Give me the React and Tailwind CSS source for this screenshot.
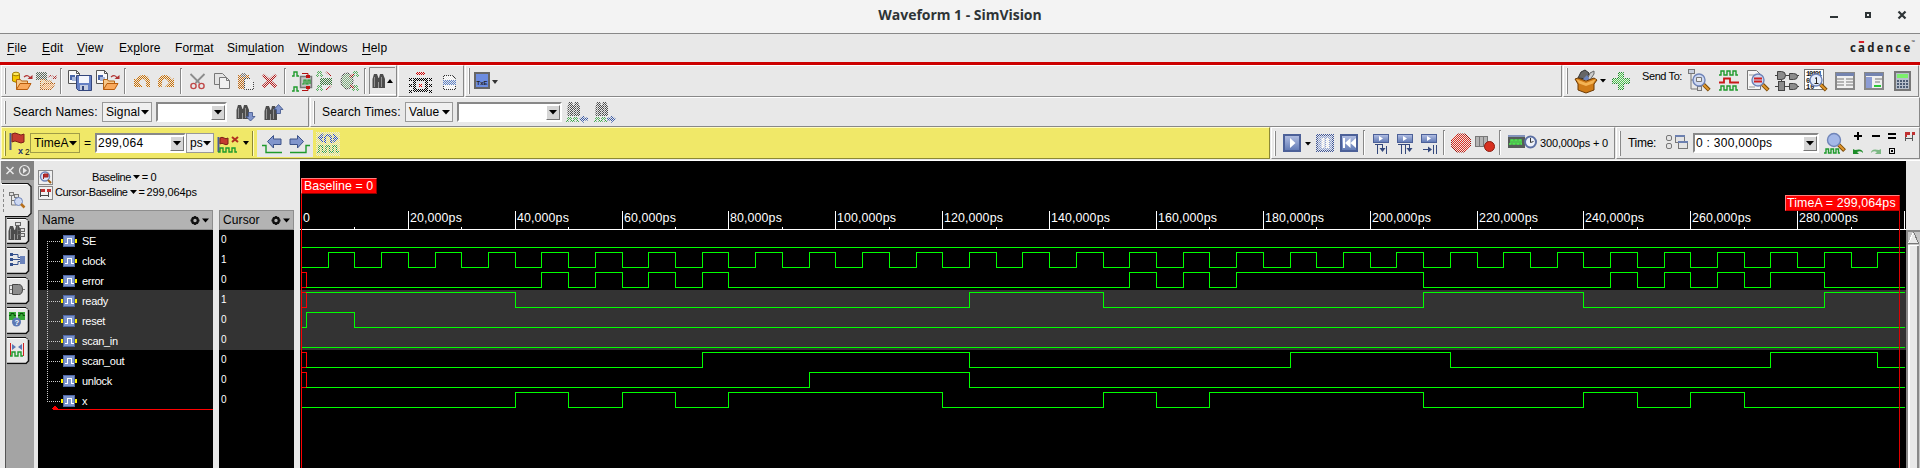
import React from "react";

/* Icon slot: its viewBox uses window coordinates, so slots placed side by side continue one another. */
function Ic({ x, y, w, h, dim, children }) {
  return (
    <svg width={w} height={h} viewBox={`${x} ${y} ${w} ${h}`} className="block shrink-0" fill="none">
      {children}
      {dim && <rect x={x} y={y} width={w} height={h} fill={dim} shapeRendering="crispEdges" />}
    </svg>
  );
}

const DIM = "url(#dim)";

function Defs() {
  return (
    <defs>
      <pattern id="dim" width="2" height="2" patternUnits="userSpaceOnUse">
        <path d="M0 0h1v1H0zM1 1h1v1H1z" fill="#e8e8e8" />
      </pattern>
      <linearGradient id="blue" x1="0" y1="0" x2="0" y2="1">
        <stop offset="0" stopColor="#b4c0e4" />
        <stop offset="1" stopColor="#5f78b4" />
      </linearGradient>
    </defs>
  );
}

const Handle = ({ x, y, h }) => (
  <g shapeRendering="crispEdges">
    <path d={`M${x + 0.5} ${y}v${h}`} stroke="#fff" />
    <path d={`M${x + 1.5} ${y}v${h}`} stroke="#888" />
  </g>
);
const Sep = ({ x, y = 68, h = 26 }) => (
  <g shapeRendering="crispEdges">
    <path d={`M${x - 1} ${y + 0.5}h2M${x - 0.5} ${y}v${h}`} stroke="#888" />
    <path d={`M${x + 0.5} ${y + 1}v${h - 1}`} stroke="#fff" />
  </g>
);
const Caret = ({ x, y, c = "#000" }) => <path d={`M${x} ${y}h6l-3 4z`} fill={c} />;
const Folder = ({ x, y }) => (
  <g>
    <path d={`M${x + 0.5} ${y + 11.5}v-10h4l1 1.500h6v3`} fill="#f7c88a" stroke="#b56414" />
    <path d={`M${x + 0.5} ${y + 11.5}l3.500 -6h11l-3.500 6z`} fill="#f9a95c" stroke="#b85c0c" />
    <path d={`M${x + 8} ${y - 1}q4 -3 6 1`} stroke="#b03030" strokeWidth="1.200" />
    <path d={`M${x + 11.5} ${y + 1}h5v-4z`} fill="#b03030" />
  </g>
);
const Page = ({ x, y }) => (
  <g>
    <path d={`M${x + 0.5} ${y + 0.5}h8l3 3v10h-11z`} fill="#fafafa" stroke="#555" />
    <path d={`M${x + 8.5} ${y + 0.5}v3h3`} stroke="#555" />
    <rect x={x + 2} y={y + 5} width="5" height="5" fill="#4a66a8" />
    <rect x={x + 4} y={y + 7} width="5" height="4" fill="#a8b8dc" />
  </g>
);
const Binos = ({ x, y }) => (
  <g fill="#4c4c4c">
    <path d={`M${x + 2} ${y}h3l1.500 4v10h-6v-9z`} />
    <path d={`M${x + 8} ${y}h3l2 5v9h-6v-10z`} />
    <rect x={x + 5} y={y + 4} width="3" height="4" />
    <path d={`M${x + 2.5} ${y + 3}v10M${x + 9.5} ${y + 3}v10`} stroke="#929292" />
  </g>
);
const Lens = ({ x, y, r = 6, fill = "#cdd8f2" }) => (
  <g>
    <path d={`M${x + r * 0.7} ${y + r * 0.7}l6 6`} stroke="#7a4a08" strokeWidth="4" />
    <path d={`M${x + r * 0.7} ${y + r * 0.7}l5.500 5.500`} stroke="#e0962c" strokeWidth="2" />
    <circle cx={x} cy={y} r={r} fill={fill} stroke="#6f84b8" strokeWidth="1.400" />
  </g>
);
const Wave = ({ x, y, c = "#1f9a2c", h = 4, n = 3, s = 6 }) => (
  <path
    d={`M${x} ${y + h}h1${Array.from({ length: n }, () => `h1v-${h}h${s / 2}v${h}h${s / 2 - 1}`).join("")}`}
    stroke={c}
    strokeWidth="1.400"
  />
);
const Gate = ({ x, y, w = 9, h = 8 }) => (
  <path d={`M${x} ${y}h${w - 4}q4 0 4 ${h / 2}q0 ${h / 2} -4 ${h / 2}h-${w - 4}z`} fill="#8c8c8c" stroke="#444" />
);
const BlueArrow = ({ x, y, flip }) => (
  <path
    transform={flip ? `translate(${2 * x + 14} 0) scale(-1 1)` : undefined}
    d={`M${x + 0.5} ${y + 6.5}l6 -6v3.500h7.500v5.500h-7.500v3.500z`}
    fill="#8296cc"
    stroke="#3c5288"
  />
);

function Segment({ className, children }) {
  return (
    <div className={`flex shrink-0 border border-t-white border-l-white border-r-[#888] border-b-[#888] ${className}`}>
      {children}
    </div>
  );
}

function Pick({ className, tone = "border-[#999] bg-[#f0f0f0]", children }) {
  return (
    <div
      className={`flex shrink-0 items-center justify-between border pr-[2px] pl-[3px] text-[12px] leading-none tracking-[0.1px] ${tone} ${className}`}
    >
      <span>{children}</span>
      <svg width="8" height="5" className="shrink-0">
        <path d="M0 0h8l-4 4.600z" fill="#000" />
      </svg>
    </div>
  );
}

function Entry({ className, children }) {
  return (
    <div
      className={`flex shrink-0 items-center justify-between border-2 border-t-[#888] border-r-white border-b-white border-l-[#888] bg-white text-[12px] leading-none tracking-[0.28px] ${className}`}
    >
      <span className="pl-px whitespace-nowrap">{children}</span>
      <span className="flex h-[15px] w-[14px] items-center justify-center border border-t-white border-r-[#777] border-b-[#777] border-l-white bg-[#d6d6d6]">
        <svg width="8" height="5">
          <path d="M0 0h8l-4 4.600z" fill="#000" />
        </svg>
      </span>
    </div>
  );
}

const menus = [
  ["", "F", "ile", "w-[35px]"],
  ["", "E", "dit", "w-[35px]"],
  ["", "V", "iew", "w-[42px]"],
  ["Ex", "p", "lore", "w-[56px]"],
  ["For", "m", "at", "w-[52px]"],
  ["Sim", "u", "lation", "w-[71px]"],
  ["", "W", "indows", "w-[64px]"],
  ["", "H", "elp", "w-[40px]"],
];

function TitleBar() {
  return (
    <div className="relative flex h-[34px] items-center justify-center border-b border-[#888] bg-[#f3f3f3] pb-[4px]">
      <span className="font-['Open_Sans','Noto_Sans',sans-serif] text-[14px] leading-none font-bold tracking-[-0.030px] text-[#2e3436]">
        Waveform 1 - SimVision
      </span>
      <svg width="90" height="20" viewBox="1825 5 90 20" className="absolute top-[5px] right-[5px]" fill="none">
        <path d="M1830 17h8" stroke="#2e3436" strokeWidth="2" />
        <rect x="1866" y="13" width="4" height="4" stroke="#2e3436" strokeWidth="2" />
        <path d="M1898.500 11.500l7 7M1905.500 11.500l-7 7" stroke="#2e3436" strokeWidth="2.200" />
      </svg>
    </div>
  );
}

function MenuBar() {
  return (
    <div className="flex h-[31px] items-center justify-between border-b-[3px] border-[#cc0000] pl-[7px]">
      <div className="flex pb-[1px] text-[12px] tracking-[0.12px]">
        {menus.map(([a, u, b, w]) => (
          <span key={u + b} className={`block ${w}`}>
            {a}
            <span className="underline underline-offset-2">{u}</span>
            {b}
          </span>
        ))}
      </div>
      <div className="flex h-full w-[70px] items-start">
        <span className="relative origin-left scale-x-[0.88] pt-[4px] font-['Open_Sans','Noto_Sans',sans-serif] text-[13px] leading-[18px] font-bold tracking-[2.500px] text-[#222]">
          cadence
          <span className="absolute top-[7px] left-[10px] h-[2px] w-[6px] bg-[#d8202c]" />
          <span className="absolute top-[4px] left-[70px] text-[5px] leading-[8px] tracking-normal">™</span>
        </span>
      </div>
    </div>
  );
}

function ToolRow1() {
  return (
    <div className="flex h-[32px] gap-px pl-px">
      <Segment className="w-[396px]">
        <Ic x={2} y={66} w={34} h={30}>
          <Defs />
          <Handle x={4} y={68} h={26} />
          <path d="M12.500 74v7q3.500 2.500 7 0v-7" fill="#f4c800" stroke="#a07c00" />
          <ellipse cx="16" cy="74" rx="3.500" ry="1.800" fill="#ffe95c" stroke="#a07c00" />
          <Folder x={16} y={78} />
        </Ic>
        <Ic x={36} y={66} w={22} h={30} dim={DIM}>
          <rect x="36" y="72" width="11" height="8" fill="#5a6a5c" />
          <Folder x={40} y={78} />
        </Ic>
        <Ic x={58} y={66} w={36} h={30}>
          <Sep x={61} />
          <Page x={68} y={70} />
          <path d="M76.500 75.500h15v15h-13l-2-2z" fill="#6580c4" stroke="#34467c" />
          <rect x="79" y="76" width="10" height="7" fill="#f4f6fc" />
          <rect x="80" y="85" width="8" height="5" fill="#c4cce0" />
          <rect x="82" y="86" width="2" height="4" fill="#34467c" />
        </Ic>
        <Ic x={94} y={66} w={33} h={30}>
          <Page x={96} y={70} />
          <Folder x={103} y={78} />
          <Sep x={125} />
        </Ic>
        <Ic x={127} y={66} w={50} h={30} dim={DIM}>
          <path d="M148 87q1-9-4-10-5-.5-6.500 5" stroke="#cc7000" strokeWidth="4" />
          <path d="M134 78v9h9z" fill="#cc7000" />
          <path d="M160 87q-1-9 4-10 5-.5 6.500 5" stroke="#cc7000" strokeWidth="4" />
          <path d="M174 78v9h-9z" fill="#cc7000" />
        </Ic>
        <Ic x={177} y={66} w={35} h={30}>
          <Sep x={181} />
          <path d="M190.500 74l9 9M204.500 74l-9 9" stroke="#8c8c8c" strokeWidth="1.800" />
          <circle cx="193.500" cy="86" r="2.600" stroke="#c04848" strokeWidth="1.400" />
          <circle cx="201.500" cy="86" r="2.600" stroke="#c04848" strokeWidth="1.400" />
        </Ic>
        <Ic x={212} y={66} w={23} h={30}>
          <path d="M214.500 73.500h8l3 3v8h-11z" fill="#e4e4e4" stroke="#777" />
          <path d="M219.500 77.500h7l3 3v8h-10z" fill="#f0f0f0" stroke="#777" />
          <path d="M226.500 77.500v3h3" stroke="#777" />
        </Ic>
        <Ic x={235} y={66} w={24} h={30} dim={DIM}>
          <rect x="238" y="75" width="11" height="14" fill="#c46c14" />
          <rect x="241" y="73" width="5" height="4" fill="#777" />
          <path d="M244.500 78.500h6l3 3v8h-9z" fill="#f4f4f4" stroke="#444" />
        </Ic>
        <Ic x={259} y={66} w={22} h={30} dim={DIM}>
          <path d="M263 75l13 12M276 75l-13 12" stroke="#b81818" strokeWidth="3.500" />
        </Ic>
        <Ic x={281} y={66} w={34} h={30}>
          <Sep x={285} />
          <Wave x={292} y={72} n={1} />
          <Wave x={292} y={87} n={1} />
          <rect x="300.500" y="76.500" width="11" height="11" fill="#c4c4c4" stroke="#777" strokeWidth="1.500" />
          <path d="M302 84h2v-4h2v4h2v-4h2v4" stroke="#1f9a2c" strokeWidth="1.200" />
          <path d="M302 73.500h6v3M302 90.500h6v-3" stroke="#b01010" />
          <rect x="306" y="75" width="4" height="3" fill="#c01010" />
          <rect x="306" y="86" width="4" height="3" fill="#c01010" />
        </Ic>
        <Ic x={315} y={66} w={46} h={30} dim={DIM}>
          <Wave x={316} y={72} n={1} />
          <Wave x={316} y={86} n={1} />
          <rect x="320" y="78" width="12" height="7" fill="#3c7c3c" />
          <path d="M326 72l5 4M326 90l5-4" stroke="#b01010" strokeWidth="1.500" />
          <ellipse cx="347" cy="81" rx="6" ry="8" fill="#7cac7c" stroke="#333" />
          <Wave x={352} y={72} n={1} />
          <Wave x={352} y={86} n={1} />
          <path d="M350 77l4-3M350 85l4 3" stroke="#b01010" strokeWidth="2" />
        </Ic>
        <Ic x={361} y={66} w={35} h={30}>
          <Sep x={365} />
          <path d="M369.500 94V67.500H395" stroke="#888" />
          <path d="M369 94.500h27" stroke="#fff" />
          <Binos x={372} y={74} />
          <path d="M387 83l3-4 3 4z" fill="#000" />
        </Ic>
      </Segment>
      <Segment className="w-[66px]">
        <Ic x={399} y={66} w={63} h={30} dim={DIM}>
          <rect x="416" y="72" width="9" height="3" fill="#d00000" />
          <rect x="414.500" y="79.500" width="12" height="11" stroke="#000" strokeWidth="3" />
          <rect x="419" y="84" width="3" height="3" fill="#e00000" />
          <path d="M409 79.500h3M409 85.500h3M409 91.500h3M429 79.500h3M429 85.500h3M429 91.500h3" stroke="#000" strokeWidth="3" />
          <path d="M443.500 75.500h9l3 3v11h-12z" fill="#fff" stroke="#333" />
          <rect x="443" y="80" width="13" height="5" fill="#5a80c8" />
        </Ic>
      </Segment>
      <Segment className="w-[1097px]">
        <Ic x={466} y={66} w={40} h={30}>
          <Handle x={468} y={68} h={26} />
          <rect x="475" y="73" width="14" height="15" fill="#6c8ce0" stroke="#666" strokeWidth="2" />
          <text x="476.500" y="85" fontSize="6" fontWeight="700" fill="#222" fontFamily="Liberation Sans, sans-serif" textLength="11">
            TxE
          </text>
          <Caret x={492} y={80} c="#333" />
        </Ic>
      </Segment>
      <Segment className="w-[356px]">
        <Ic x={1564} y={66} w={44} h={30}>
          <Handle x={1566} y={68} h={26} />
          <path d="M1578 78l3-6 4-2 4 3-2 6z" fill="#666" stroke="#333" />
          <path d="M1587 80l3-7 4-2v3l-4 6z" fill="#ccc" stroke="#666" />
          <path d="M1582 80l5-5 3 5z" fill="#6c84bc" />
          <path d="M1575 79l3-1 8 3 8-3 3 2-3 4v6l-8 3-8-3v-6z" fill="#d07c18" stroke="#6c3a04" />
          <path d="M1576 79l10 4 10-4-3 4.500-7 2.500-7-2.500z" fill="#f4b454" />
          <path d="M1600 79h6l-3 3.500z" fill="#000" />
        </Ic>
        <Ic x={1608} y={66} w={34} h={30} dim={DIM}>
          <path d="M1618.500 72.500h5v6h6v5h-6v6h-5v-6h-6v-5h6z" fill="#4ccc4c" stroke="#1c8c28" />
        </Ic>
        <div className="w-[44px] shrink-0 pt-[3px] text-[11px] leading-[15px] tracking-[-0.4px] whitespace-nowrap">Send To:</div>
        <Ic x={1686} y={66} w={30} h={30}>
          <path d="M1691 74v15h7M1691 80h7" stroke="#777" />
          <rect x="1688.500" y="69.500" width="6" height="4" fill="#c8d0e0" stroke="#777" />
          <rect x="1697.500" y="86.500" width="4" height="4" fill="#ddd" stroke="#777" />
          <Lens x={1699} y={80} />
          <path d="M1696.500 77.500h5v4h-5z" stroke="#777" fill="#eee" />
        </Ic>
        <Ic x={1716} y={66} w={28} h={30}>
          <Wave x={1719} y={71} n={3} />
          <path d="M1719 82.500h5v-4h6v4h9" stroke="#c81818" strokeWidth="1.800" />
          <Wave x={1719} y={86} n={3} />
        </Ic>
        <Ic x={1744} y={66} w={28} h={30}>
          <path d="M1747.500 70.500h9l4 4v15h-13z" fill="#f6f6f6" stroke="#777" />
          <path d="M1749 75h7M1749 87h6" stroke="#999" />
          <Lens x={1758} y={80} />
          <path d="M1754 78.500h8M1754 81.500h8" stroke="#d02020" strokeWidth="2" />
        </Ic>
        <Ic x={1772} y={66} w={30} h={30}>
          <path d="M1775 75.500h24M1775 86.500h24M1781.500 79v4" stroke="#444" />
          <Gate x={1777.5} y={71.5} w={8} />
          <Gate x={1789.5} y={73.5} w={8} h={6} />
          <rect x="1778.500" y="81.500" width="6" height="9" fill="#8c8c8c" stroke="#444" />
          <Gate x={1789.5} y={83.5} w={8} h={6} />
        </Ic>
        <Ic x={1802} y={66} w={30} h={30}>
          <rect x="1804.500" y="69.500" width="19" height="20" fill="#fff" stroke="#777" />
          <g fontSize="7" fill="#111" fontFamily="Liberation Mono, monospace" fontWeight="700">
            <text x="1806" y="76" textLength="16">10101</text>
            <text x="1806" y="83">0</text>
            <text x="1806" y="89">10</text>
          </g>
          <Lens x={1816} y={80} fill="#e4ecfa" />
          <path d="M1815 78.500l1.500-1v6M1814.500 83.500h4" stroke="#222" />
        </Ic>
        <Ic x={1832} y={66} w={28} h={30}>
          <rect x="1836" y="73" width="18" height="16" fill="#f0f0f0" stroke="#888" strokeWidth="2" />
          <rect x="1836" y="73" width="18" height="3" fill="#7484b0" />
          <path d="M1837 79h7M1837 82h7M1837 85h7M1846 79h7M1846 82h7M1846 85h7" stroke="#777" />
        </Ic>
        <Ic x={1860} y={66} w={28} h={30}>
          <rect x="1865" y="73" width="18" height="16" fill="#f0f0f0" stroke="#888" strokeWidth="2" />
          <rect x="1865" y="73" width="18" height="3" fill="#7484b0" />
          <rect x="1866" y="77" width="6" height="11" fill="#8c9cd4" />
          <path d="M1875 79h7M1875 82h5" stroke="#777" />
          <rect x="1874" y="85" width="7" height="2" fill="#28c838" />
        </Ic>
        <Ic x={1888} y={66} w={28} h={30}>
          <rect x="1895" y="72" width="15" height="18" fill="#b8c0cc" stroke="#777" strokeWidth="2" />
          <rect x="1897" y="74" width="11" height="4" fill="#7cf06c" />
          <path d="M1897 81h11M1897 84h11M1897 87h11" stroke="#4c5c74" strokeWidth="2" strokeDasharray="2 1" />
        </Ic>
      </Segment>
    </div>
  );
}

function ToolRow2() {
  return (
    <div className="flex h-[30px] gap-px pl-px">
      <Segment className="w-[308px]">
        <Ic x={2} y={98} w={11} h={28}>
          <Handle x={4} y={101} h={23} />
        </Ic>
        <span className="w-[89px] shrink-0 pt-[5px] text-[12px] leading-[18px] tracking-[0.15px] whitespace-nowrap">Search Names:</span>
        <Pick className="mt-[4px] h-[20px] w-[50px]">Signal</Pick>
        <Entry className="mt-[4px] ml-[4px] h-[20px] w-[71px]" />
        <Ic x={227} y={98} w={80} h={28}>
          <Binos x={236} y={105} />
          <path d="M248.500 112.500h4v4h2.500l-4.500 4.500-4.500-4.500h2.500z" fill="#8296cc" stroke="#3c5288" strokeWidth=".8" />
          <Binos x={264} y={106} />
          <path d="M276.500 113.500h4v-4h2.500l-4.500-5-4.500 5h2.500z" fill="#8296cc" stroke="#3c5288" strokeWidth=".8" />
        </Ic>
      </Segment>
      <Segment className="w-[1610px]">
        <Ic x={311} y={98} w={11} h={28}>
          <Handle x={313} y={101} h={23} />
        </Ic>
        <span className="w-[83px] shrink-0 pt-[5px] text-[12px] leading-[18px] tracking-[0.15px] whitespace-nowrap">Search Times:</span>
        <Pick className="mt-[4px] h-[20px] w-[48px]">Value</Pick>
        <Entry className="mt-[4px] ml-[4px] h-[20px] w-[105px]" />
        <Ic x={562} y={98} w={60} h={28} dim={DIM}>
          <Binos x={567} y={102} />
          <Wave x={566} y={118} n={2} h={3} />
          <path d="M579 119l5-4v2.500h4v3h-4v2.500z" fill="#3c5ca8" />
          <Binos x={595} y={102} />
          <Wave x={594} y={118} n={2} h={3} />
          <path d="M616 119l-5-4v2.500h-4v3h4v2.500z" fill="#3c5ca8" />
        </Ic>
      </Segment>
    </div>
  );
}

function ToolRow3() {
  return (
    <div className="flex h-[32px] gap-px pl-px">
      <div className="flex w-[1269px] shrink-0 border border-t-[#fffcc0] border-r-[#8c8834] border-b-[#8c8834] border-l-[#fffcc0] bg-[#f0e868]">
        <Ic x={2} y={128} w={28} h={30}>
          <path d="M4.500 131v25" stroke="#fffcc0" />
          <path d="M5.500 131v25" stroke="#8c8834" />
          <path d="M10.500 133v17" stroke="#4c5c94" strokeWidth="2" />
          <path d="M12 134q3-2 6 0t6 0v8q-3 2-6 0t-6 0z" fill="#c43c30" stroke="#7c2018" />
          <text x="18" y="154" fontSize="9" fontWeight="700" fill="#1c2c74" fontFamily="Liberation Sans, sans-serif">x</text>
          <text x="25" y="155" fontSize="8.500" fill="#111" fontFamily="Liberation Sans, sans-serif">2</text>
        </Ic>
        <Pick className="mt-[5px] h-[20px] w-[50px]" tone="border-[#a09c48] bg-[#f0e868]">TimeA</Pick>
        <span className="w-[15px] shrink-0 pt-[7px] pl-[4px] text-[12px] leading-[16px]">=</span>
        <Entry className="mt-[5px] h-[20px] w-[91px]">299,064</Entry>
        <Pick className="mt-[5px] h-[20px] w-[28px]">ps</Pick>
        <Ic x={214} y={128} w={43} h={30}>
          <path d="M218.500 137v15" stroke="#4c5c94" strokeWidth="2" />
          <path d="M220 138q2-1.500 4 0t4 0v6q-2 1.500-4 0t-4 0z" fill="#c43c30" stroke="#7c2018" />
          <path d="M232 137l6 5M238 137l-6 5" stroke="#b03020" strokeWidth="2" />
          <Wave x={218} y={148} n={3} h={4} />
          <path d="M243 141h6l-3 4z" fill="#000" />
          <path d="M252.500 131v25" stroke="#8c8834" />
          <path d="M253.500 131v25" stroke="#fffcc0" />
        </Ic>
        <div className="mt-[2px] h-[27px] w-[56px] shrink-0 bg-[#e8e8e8]">
          <Ic x={257} y={130} w={56} h={27}>
            <path d="M262 145.500h4v7h16" stroke="#1f9a2c" strokeWidth="1.400" />
            <BlueArrow x={267} y={135} />
            <path d="M290 152.500h16v-7h4" stroke="#1f9a2c" strokeWidth="1.400" />
            <BlueArrow x={290} y={135} flip />
          </Ic>
        </div>
        <div className="mt-[4px] ml-[3px] h-[24px] w-[24px] shrink-0 bg-[#f0e868]">
          <Ic x={316} y={132} w={24} h={24} dim={DIM}>
            <path d="M323 134l-4 4 4 4M333 134l4 4-4 4M318 138h5M333 138h5M325 143v-6q3-4 6 0v6" stroke="#3454a8" strokeWidth="2" />
            <Wave x={317} y={146} n={3} h={6} s={7} />
          </Ic>
        </div>
      </div>
      <Segment className="w-[344px]">
        <Ic x={1272} y={128} w={42} h={30}>
          <Handle x={1274} y={131} h={25} />
          <rect x="1284" y="135" width="16" height="16" fill="url(#blue)" stroke="#4c6098" strokeWidth="2" />
          <path d="M1290 138v10l5.500-5z" fill="#fff" />
          <path d="M1305 142h6l-3 3.500z" fill="#000" />
        </Ic>
        <Ic x={1314} y={128} w={22} h={30} dim={DIM}>
          <rect x="1317" y="135" width="16" height="16" fill="#8ca0d4" stroke="#3c5498" strokeWidth="2" />
          <path d="M1323 138v10M1327.500 138v10" stroke="#fff" strokeWidth="3" />
        </Ic>
        <Ic x={1336} y={128} w={30} h={30}>
          <rect x="1341" y="135" width="16" height="16" fill="url(#blue)" stroke="#4c6098" strokeWidth="2" />
          <path d="M1344 138v10" stroke="#fff" strokeWidth="2" />
          <path d="M1350.500 138v10l-5.500-5zM1356 138v10l-5.500-5z" fill="#fff" />
          <Sep x={1364} y={130} h={25} />
        </Ic>
        <Ic x={1366} y={128} w={80} h={30}>
          {[1373, 1397, 1421].map((x, i) => (
            <g key={x}>
              <rect x={x + 0.5} y="134.500" width="15" height="8" fill="url(#blue)" stroke="#4c6098" />
              <path d={`M${x + 6} 136v5l4-2.500z`} fill="#fff" />
              {i === 0 && (
                <g>
                  <path d="M1375 144.500h8M1377.500 145v9M1382.500 144v5M1386.500 146v8" stroke="#34487c" />
                  <path d="M1379.500 148h6l-3 4z" fill="#34487c" />
                </g>
              )}
              {i === 1 && (
                <g>
                  <path d="M1398 144.500h11M1401.500 145v9M1405.500 145v9M1409.500 144v5" stroke="#34487c" />
                  <path d="M1406.500 148h6l-3 4z" fill="#34487c" />
                </g>
              )}
              {i === 2 && (
                <g>
                  <path d="M1423 149.500h7M1433.500 145v9M1436.500 145v9" stroke="#34487c" />
                  <path d="M1428 146.500v6l4-3z" fill="#34487c" />
                </g>
              )}
            </g>
          ))}
          <Sep x={1444} y={130} h={25} />
        </Ic>
        <Ic x={1446} y={128} w={26} h={30} dim={DIM}>
          <path d="M1457 134h8l5.500 5.500v7l-5.500 5.500h-8l-5.500-5.500v-7z" fill="#e02c1c" stroke="#a01008" />
        </Ic>
        <Ic x={1472} y={128} w={68} h={30}>
          <rect x="1475.500" y="136.500" width="12" height="10" fill="#b4b4b4" stroke="#777" />
          <path d="M1479.500 137v9M1483.500 137v9" stroke="#777" />
          <circle cx="1489.500" cy="146.500" r="5" fill="#d83020" stroke="#8c1c10" />
          <Sep x={1500} y={130} h={25} />
          <rect x="1508" y="135" width="17" height="13" fill="#555c58" />
          <rect x="1508" y="135" width="17" height="2" fill="#8494bc" />
          <Wave x={1509} y={140} c="#4cf04c" n={3} s={4} />
          <circle cx="1530.500" cy="142" r="5.500" fill="#eef2fa" stroke="#5c70a4" strokeWidth="2" />
          <path d="M1530.500 138v4.500l3-1" stroke="#333" />
        </Ic>
        <span className="pt-[7px] text-[11px] leading-[16px] tracking-[-0.15px] whitespace-nowrap">300,000ps + 0</span>
      </Segment>
      <Segment className="w-[304px]">
        <Ic x={1616} y={128} w={11} h={30}>
          <Handle x={1618} y={131} h={25} />
        </Ic>
        <span className="w-[35px] shrink-0 pt-[7px] text-[12px] leading-[16px] tracking-[-0.3px]">Time:</span>
        <Ic x={1662} y={128} w={30} h={30}>
          <g stroke="#777" fill="#e4e4e4">
            <rect x="1665.500" y="135.500" width="5" height="5" rx="1.500" />
            <rect x="1665.500" y="143.500" width="5" height="5" rx="1.500" />
            <rect x="1674.500" y="135.500" width="9" height="7" />
            <rect x="1677.500" y="141.500" width="9" height="7" />
          </g>
          <path d="M1674 136h10M1677 142h10" stroke="#6c80b0" strokeWidth="2" />
        </Ic>
        <Entry className="mt-[5px] h-[20px] w-[126px]">0 : 300,000ps</Entry>
        <Ic x={1818} y={128} w={100} h={30}>
          <Wave x={1823} y={149} n={3} h={4} s={5} />
          <Lens x={1833} y={140} r={6.5} fill="#a4b8e8" />
          <path d="M1853 136h8M1857 132v8M1871 136h8M1887 134h8M1887 138h8" stroke="#000" strokeWidth="2" />
          <path d="M1904.500 132v9M1911.500 132v9M1905 138.500h7" stroke="#555" />
          <path d="M1904 132h5v3h-3v2h-2zM1911 132h3v3h-3z" fill="#c03030" />
          <path d="M1852 149v5h6l-2-2q4-2 6 1 0-5-8-3z" fill="#1c8c28" />
          <path d="M1880 149v5h-6l2-2q-4-2-6 1 0-5 8-3z" fill="#7cb884" />
          <rect x="1888.500" y="148.500" width="5" height="5" stroke="#000" />
          <rect x="1890" y="150" width="2" height="2" fill="#000" />
        </Ic>
      </Segment>
    </div>
  );
}

const Tab = ({ y, h }) => (
  <g>
    <path d={`M7 ${y + 0.5}h19l3 3v${h - 6}l-3 3H7z`} fill="#e8e8e8" />
    <path d={`M7 ${y + 0.5}h19l2 2`} stroke="#111" />
    <path d={`M7 ${y + 1.5}h18`} stroke="#fff" />
    <path d={`M28.500 ${y + 3}v${h - 6}l-2.500 2.500H7`} stroke="#111" strokeWidth="1.500" />
  </g>
);

function SideTabs() {
  return (
    <div className="flex w-[34px] shrink-0 flex-col bg-[#a4a4a4]">
      <Ic x={0} y={161} w={34} h={307}>
        <rect x="0" y="161" width="1" height="307" fill="#e8e8e8" />
        <rect x="1" y="161" width="33" height="19" fill="#828282" />
        <path d="M6.500 167l7 7M13.500 167l-7 7" stroke="#e8e8e8" strokeWidth="1.500" />
        <circle cx="24.500" cy="170.500" r="5" stroke="#e8e8e8" strokeWidth="1.200" />
        <path d="M23 167.500v6l4-3z" fill="#e8e8e8" />
        <rect x="1" y="216" width="4" height="252" fill="#e8e8e8" />
        <path d="M5.500 217v251" stroke="#555" />
        <path d="M1 183h27l3 3v28l-3 3H1z" fill="#e8e8e8" />
        <path d="M2 183.500h26l3 3v27l-3 3H5" stroke="#111" strokeWidth="1.200" />
        <path d="M1 184.500h26" stroke="#fff" />
        <path d="M3.500 189v23" stroke="#888" strokeDasharray="3 2" />
        <g stroke="#777">
          <path d="M11.500 196v9h5M11 200.500h5" />
          <rect x="9.500" y="192.500" width="4" height="3" fill="#ddd" />
          <rect x="14.500" y="194.500" width="4" height="3" fill="#ddd" />
        </g>
        <circle cx="18.500" cy="201.500" r="4" fill="#cdd8f2" stroke="#6f84b8" />
        <path d="M21 204l3.500 3.500" stroke="#b8701c" strokeWidth="2.500" />
        <Tab y={218} h={26} />
        <Binos x={8} y={226} />
        <path d="M17.500 224.500v10h4M17.500 230.500h4" stroke="#666" />
        <g stroke="#666" fill="#ddd">
          <rect x="15.500" y="222.500" width="5" height="3" />
          <rect x="20.500" y="228.500" width="4" height="3" />
          <rect x="20.500" y="233.500" width="4" height="3" />
        </g>
        <Tab y={247} h={27} />
        <path d="M10 254.500h8v3h3M10 259.500h11M10 264.500h8v-3h3" stroke="#34508c" />
        <path d="M10 254.500h3M10 259.500h3M10 264.500h3" stroke="#34508c" strokeWidth="3" />
        <rect x="20" y="256" width="5" height="8" fill="#6c84bc" />
        <Tab y={277} h={27} />
        <path d="M9 285.500h4M9 289.500h4M9 293.500h4M22 289.500h3M9.500 285v9" stroke="#777" />
        <Gate x={12.5} y={284.5} w={10} h={10} />
        <Tab y={307} h={27} />
        <rect x="9" y="312" width="7" height="8" fill="#38a838" />
        <rect x="18" y="312" width="7" height="8" fill="#38a838" />
        <path d="M9 315.500h2v-2h3v2h2M18 315.500h2v-2h3v2h2" stroke="#0c500c" />
        <circle cx="16.500" cy="322" r="4.500" fill="#5c78b4" />
        <text x="14.500" y="325" fontSize="7.500" fontWeight="700" fill="#fff" fontFamily="Liberation Sans, sans-serif">?</text>
        <Tab y={337} h={27} />
        <path d="M10.500 343v13M23.500 343v13" stroke="#d02020" />
        <path d="M12 344v6l4-3zM22 344v6l-4-3z" fill="#5c78b4" />
        <Wave x={10} y={352} n={2} />
      </Ic>
    </div>
  );
}

const signals = [
  { name: "SE", value: "0", edges: [] },
  { name: "clock", value: "1", edges: Array.from({ length: 59 }, (_, i) => (i + 1) * 5) },
  { name: "error", value: "0", unknown: true, edges: [45, 50, 55, 60, 65, 70, 75, 80, 155, 160, 165, 170, 175, 210, 245, 250, 255, 260, 265, 270, 275, 285] },
  { name: "ready", value: "1", unknown: true, high: true, edges: [40, 125, 150, 210, 240, 285] },
  { name: "reset", value: "0", edges: [1, 10] },
  { name: "scan_in", value: "0", edges: [] },
  { name: "scan_out", value: "0", unknown: true, edges: [75, 125, 185, 215, 275, 295] },
  { name: "unlock", value: "0", unknown: true, edges: [95, 125] },
  { name: "x", value: "0", edges: [40, 50, 60, 70, 80, 120, 150, 160, 170, 210, 240, 250, 260, 270] },
];

const rowTone = (i) => (i >= 3 && i <= 5 ? "bg-[#333333]" : "bg-black");

function Gear() {
  return (
    <svg width="20" height="11" className="shrink-0" fill="none">
      <circle cx="5" cy="5.500" r="2.800" stroke="#111" strokeWidth="2.200" />
      <path d="M5 1v1.500M5 8.500V10M.5 5.500H2M8 5.500h1.500M2 2.500l1 1M7 7.500l1 1M8 2.500l-1 1M3 7.500l-1 1" stroke="#111" strokeWidth="1.800" />
      <path d="M12 3.500h7l-3.500 4z" fill="#000" />
    </svg>
  );
}

function ColumnHead({ children }) {
  return (
    <div className="flex h-[20px] items-center justify-between border border-[#8e8e8e] bg-[#b3b3b3] pr-[2px] pl-[3px] text-[12px] leading-none tracking-[0.1px]">
      {children}
      <Gear />
    </div>
  );
}

const DownTri = () => (
  <svg width="7" height="4" className="mx-[2px] inline-block align-[2px]">
    <path d="M0 0h7l-3.500 4z" fill="#000" />
  </svg>
);

function SignalPanel() {
  return (
    <div className="flex w-[266px] shrink-0 flex-col pl-[4px]">
      <div className="flex h-[49px] shrink-0 pt-[9px]">
        <Ic x={38} y={170} w={16} h={31}>
          <g fill="#f0f0f0" stroke="#888">
            <rect x="38.500" y="170.500" width="14" height="14" />
            <rect x="38.500" y="186.500" width="14" height="13" />
          </g>
          <circle cx="45" cy="176.500" r="4.500" fill="#dfe6f6" stroke="#6f84b8" strokeWidth="1.400" />
          <path d="M48 180l3 3" stroke="#a05c10" strokeWidth="2" />
          <path d="M43.500 174v5M44 174h4v3h-4z" fill="#c03030" stroke="#a02020" />
          <path d="M40.500 189v8M48.500 189v8M41 195.500h7" stroke="#444" />
          <path d="M41 189h4v3h-4zM47 189h4v3h-4z" fill="#c03030" />
        </Ic>
        <div className="pl-[1px] text-[11px] leading-[15px] tracking-[-0.42px] whitespace-nowrap">
          <div className="pl-[37px]">Baseline<DownTri />= 0</div>
          <div>Cursor-Baseline<DownTri />=<span className="pl-[2px] tracking-[-0.120px]">299,064ps</span></div>
        </div>
      </div>
      <div className="flex flex-1">
        <div className="flex w-[175px] flex-col bg-black">
          <ColumnHead>Name</ColumnHead>
          {signals.map((s, i) => (
            <div key={s.name} className={`flex h-[20px] items-center text-[11px] leading-none tracking-[-0.3px] text-white ${rowTone(i)}`}>
              <Ic x={0} y={0} w={44} h={20}>
                <g shapeRendering="crispEdges">
                  <path d={`M9.500 ${i === 0 ? 11 : 1}V${i === 8 ? 12 : 20}M9 11.500h14`} stroke="#ccc" strokeDasharray="1 1" />
                  <rect x="23" y="9" width="2" height="4" fill="#ffee00" />
                  <rect x="37" y="9" width="2" height="4" fill="#ffee00" />
                  <rect x="25.500" y="5.500" width="11" height="11" fill="#7c94cc" stroke="#5068a4" />
                  <path d="M27 13.500h2.500v-5h4v5h2" stroke="#fff" />
                </g>
              </Ic>
              <span className="pt-[3px]">{s.name}</span>
            </div>
          ))}
          <svg width="175" height="6" viewBox="38 405 175 6" className="-mt-[5px]" shapeRendering="crispEdges">
            <path d="M53 409h160v1H53z" fill="#ff0000" />
            <path d="M52 409h6l-2-3h-2z" fill="#ff0000" />
          </svg>
        </div>
        <div className="ml-[6px] flex w-[75px] flex-col bg-black">
          <ColumnHead>Cursor</ColumnHead>
          {signals.map((s, i) => (
            <div key={s.name} className={`h-[20px] pt-[2px] pl-[2px] text-[10px] leading-[15px] text-white ${rowTone(i)}`}>
              {s.value}
            </div>
          ))}
        </div>
      </div>
    </div>
  );
}

const X0 = 1;
const px = (t) => X0 + Math.round((t * 106.87) / 20) + 0.5;

function tracePath(s, i) {
  const low = 17.5 + 20 * i;
  const top = low - 15;
  let level = s.high ? top : low;
  let d = `M${s.unknown ? px(1) - 0.5 : 1} ${level}`;
  for (const t of s.edges) {
    level = level === top ? low : top;
    d += `H${px(t)}V${level}`;
  }
  return `${d}H1605`;
}

function Waveforms() {
  const ticks = Array.from({ length: 15 }, (_, i) => i * 20);
  return (
    <div className="relative flex w-[1606px] shrink-0 flex-col bg-black">
      <div className="relative h-[69px] shrink-0 overflow-hidden">
        <svg width="1606" height="69" className="block" shapeRendering="crispEdges">
          <path d="M0 68.500h1606" stroke="#fff" />
          {ticks.map((t) => (
            <path key={t} d={`M${px(t + 20)} 50v19M${px(t + 10)} 66v3`} stroke="#fff" />
          ))}
        </svg>
        {ticks.map((t) => (
          <span
            key={t}
            className="absolute top-[49px] text-[12.400px] leading-[16px] tracking-[0.120px] whitespace-nowrap text-white"
            style={{ left: px(t) + 1.5 }}
          >
            {t ? `${t},000ps` : "0"}
          </span>
        ))}
      </div>
      <svg width="1606" height="238" className="block" fill="none" shapeRendering="crispEdges">
        <rect y="60" width="1606" height="60" fill="#333333" />
        {signals.map((s, i) => (
          <g key={s.name}>
            {s.unknown && <path d={`M1 ${2.5 + 20 * i}h5.500v15H1`} stroke="#ff0000" />}
            <path d={tracePath(s, i)} stroke="#00ff00" />
          </g>
        ))}
      </svg>
      <div className="absolute top-[17px] bottom-0 left-px w-px bg-[#ff0000]" />
      <div className="absolute top-[49px] right-[6px] bottom-0 w-px bg-[#e00000]" />
      <div className="absolute top-[17px] left-px h-[16px] w-[76px] border border-t-[#ff8080] border-r-[#900000] border-b-[#900000] border-l-[#ff8080] bg-[#ff0000] pl-[2px] text-[12.400px] leading-[14px] tracking-[0.050px] whitespace-nowrap text-white">
        Baseline = 0
      </div>
      <div className="absolute top-[34px] right-[6px] h-[16px] w-[115px] border border-t-[#ff8080] border-r-[#c00000] border-b-[#c00000] border-l-[#ff8080] bg-[#ff0000] pl-px text-[12.400px] leading-[14px] tracking-[0.120px] whitespace-nowrap text-white">
        TimeA = 299,064ps
      </div>
    </div>
  );
}

function ScrollBar() {
  return (
    <svg width="14" height="307" viewBox="1906 161 14 307" className="block shrink-0" shapeRendering="crispEdges">
      <rect x="1906" y="161" width="14" height="307" fill="#e8e8e8" />
      <path d="M1906 230h14v2h-12v236h-2z" fill="#888" />
      <rect x="1908" y="232" width="12" height="236" fill="#c4c4c4" />
      <path d="M1908 243h11v1h-11z" fill="#888" />
      <path d="M1913.500 232l5 11h-10.500z" fill="#e8e8e8" />
      <path d="M1913.500 232l-5 11" stroke="#fff" />
      <path d="M1913.500 232l5 11h-10" stroke="#777" fill="none" />
      <rect x="1908" y="245" width="11" height="223" fill="#e8e8e8" />
      <path d="M1908 245h10v1h-8v222h-2z" fill="#fff" />
      <path d="M1917 246h2v222h-2z" fill="#888" />
    </svg>
  );
}

export default function App() {
  return (
    <div className="flex h-[468px] w-[1920px] flex-col overflow-hidden bg-[#e8e8e8] font-['Liberation_Sans',Arial,sans-serif] text-black">
      <TitleBar />
      <MenuBar />
      <ToolRow1 />
      <ToolRow2 />
      <ToolRow3 />
      <div className="h-[2px] shrink-0 border-b border-white" />
      <div className="flex h-[307px] shrink-0">
        <SideTabs />
        <SignalPanel />
        <Waveforms />
        <ScrollBar />
      </div>
    </div>
  );
}
